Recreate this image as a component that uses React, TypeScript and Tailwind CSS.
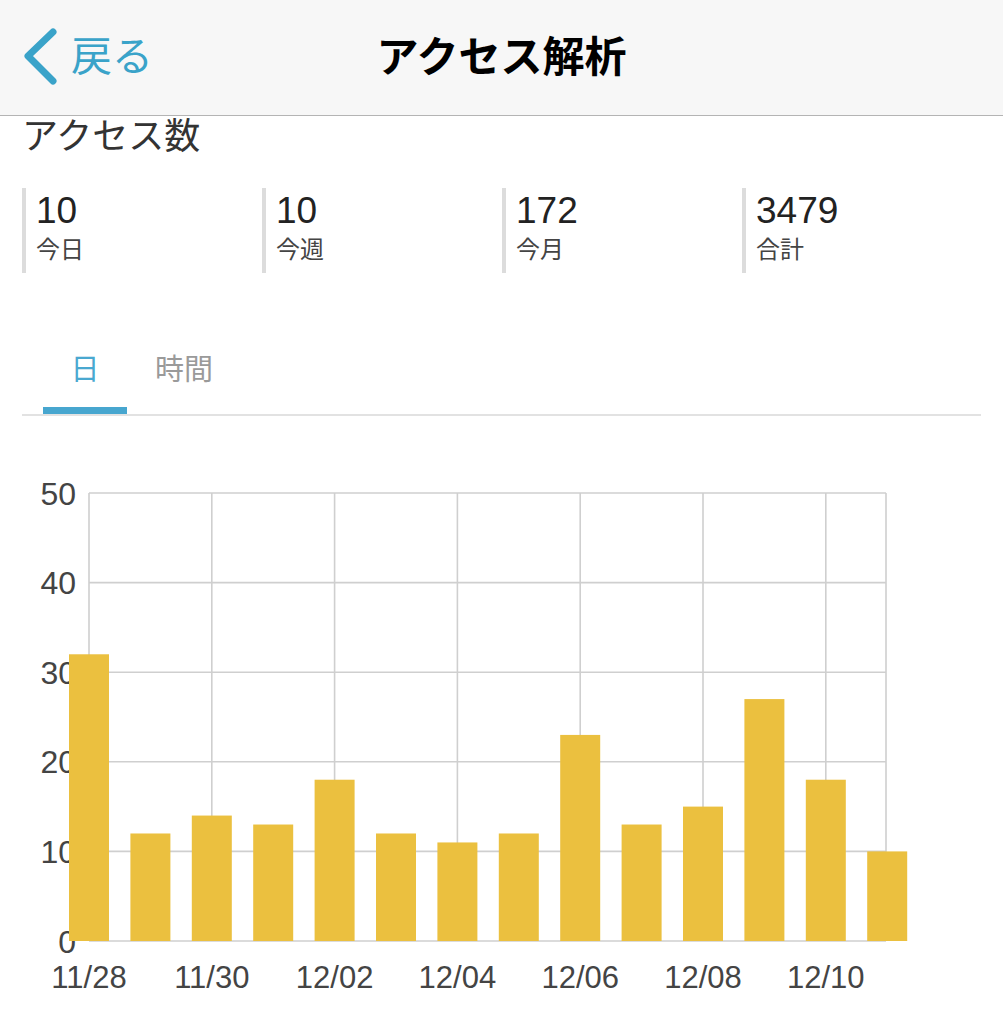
import React from "react";

const FONT = { fontFamily: '"Liberation Sans", "Noto Sans CJK JP", sans-serif' };

const STATS = [
  { value: "10", label: "今日" },
  { value: "10", label: "今週" },
  { value: "172", label: "今月" },
  { value: "3479", label: "合計" },
];

const VALUES = [32, 12, 14, 13, 18, 12, 11, 12, 23, 13, 15, 27, 18, 10];
const LABELS = ["11/28", "11/30", "12/02", "12/04", "12/06", "12/08", "12/10"];

// chart geometry (svg starts at page y = 416)
const TOP = 493 - 416;
const BOTTOM = 941 - 416;
const LEFT = 89;
const RIGHT = 886;
const DAY = 61.4;
const unit = (BOTTOM - TOP) / 50;

function BarChart() {
  return (
    <svg width="1003" height="608" viewBox="0 0 1003 608" className="block">
      {[0, 10, 20, 30, 40, 50].map((v) => {
        const y = BOTTOM - v * unit;
        return (
          <g key={v}>
            <line x1={LEFT} x2={RIGHT} y1={y} y2={y} stroke="#cfcfcf" strokeWidth="1.6" />
            <text x="76" y={y + 11.5} textAnchor="end" fontSize="32" fill="#444" style={FONT}>
              {v}
            </text>
          </g>
        );
      })}
      {LABELS.map((l, k) => {
        const x = LEFT + DAY * 2 * k;
        return (
          <g key={l}>
            <line x1={x} x2={x} y1={TOP} y2={BOTTOM} stroke="#cfcfcf" strokeWidth="1.6" />
            <text x={x} y={BOTTOM + 47} textAnchor="middle" fontSize="31" fill="#444" style={FONT}>
              {l}
            </text>
          </g>
        );
      })}
      <line x1={RIGHT} x2={RIGHT} y1={TOP} y2={BOTTOM} stroke="#cfcfcf" strokeWidth="1.6" />
      {VALUES.map((v, i) => {
        const cx = LEFT + DAY * i;
        const h = v * unit;
        return <rect key={i} x={cx - 20} y={BOTTOM - h} width="40" height={h} fill="#ebc03f" />;
      })}
    </svg>
  );
}

export default function App() {
  return (
    <div className="w-[1003px] h-[1024px] overflow-hidden bg-white text-[#333]" style={FONT}>
      <header className="relative flex h-[116px] items-center justify-center border-b border-[#b4b4b4] bg-[#f7f7f7]">
        <div className="absolute left-[22px] top-[28px] flex items-center">
          <svg width="36" height="58" viewBox="0 0 36 58">
            <path d="M31 4 L6 28 L31 53" fill="none" stroke="#3aa3c9" strokeWidth="7" strokeLinecap="round" strokeLinejoin="round" />
          </svg>
          <span className="ml-[13px] text-[41px] leading-none text-[#3aa3c9]">戻る</span>
        </div>
        <h1 className="text-[42px] font-bold leading-none text-black">アクセス解析</h1>
      </header>

      <div className="pl-[22px] pt-[1px] text-[36px] leading-[40px] text-[#333]">アクセス数</div>

      <div className="mt-[31px] flex pl-[22px]">
        {STATS.map((s) => (
          <div key={s.label} className="w-[240px] border-l-4 border-[#dcdcdc] pl-[10px] h-[85px]">
            <div className="pt-[2px] text-[37px] leading-[42px] text-[#222]">{s.value}</div>
            <div className="mt-[3px] text-[24px] leading-[30px] text-[#444]">{s.label}</div>
          </div>
        ))}
      </div>

      <div className="ml-[22px] mr-[22px] mt-[70px] flex h-[73px] items-end border-b-2 border-[#e2e2e2]">
        <div className="ml-[21px] flex w-[84px] flex-col items-center">
          <span className="text-[29px] leading-[34px] text-[#4aa8d0]">日</span>
          <div className="mt-[20px] h-[7px] w-full bg-[#47a6cf]" />
        </div>
        <div className="ml-[15px] flex w-[84px] flex-col items-center">
          <span className="text-[29px] leading-[34px] text-[#9a9a9a]">時間</span>
          <div className="mt-[20px] h-[7px] w-full" />
        </div>
      </div>

      <BarChart />
    </div>
  );
}
